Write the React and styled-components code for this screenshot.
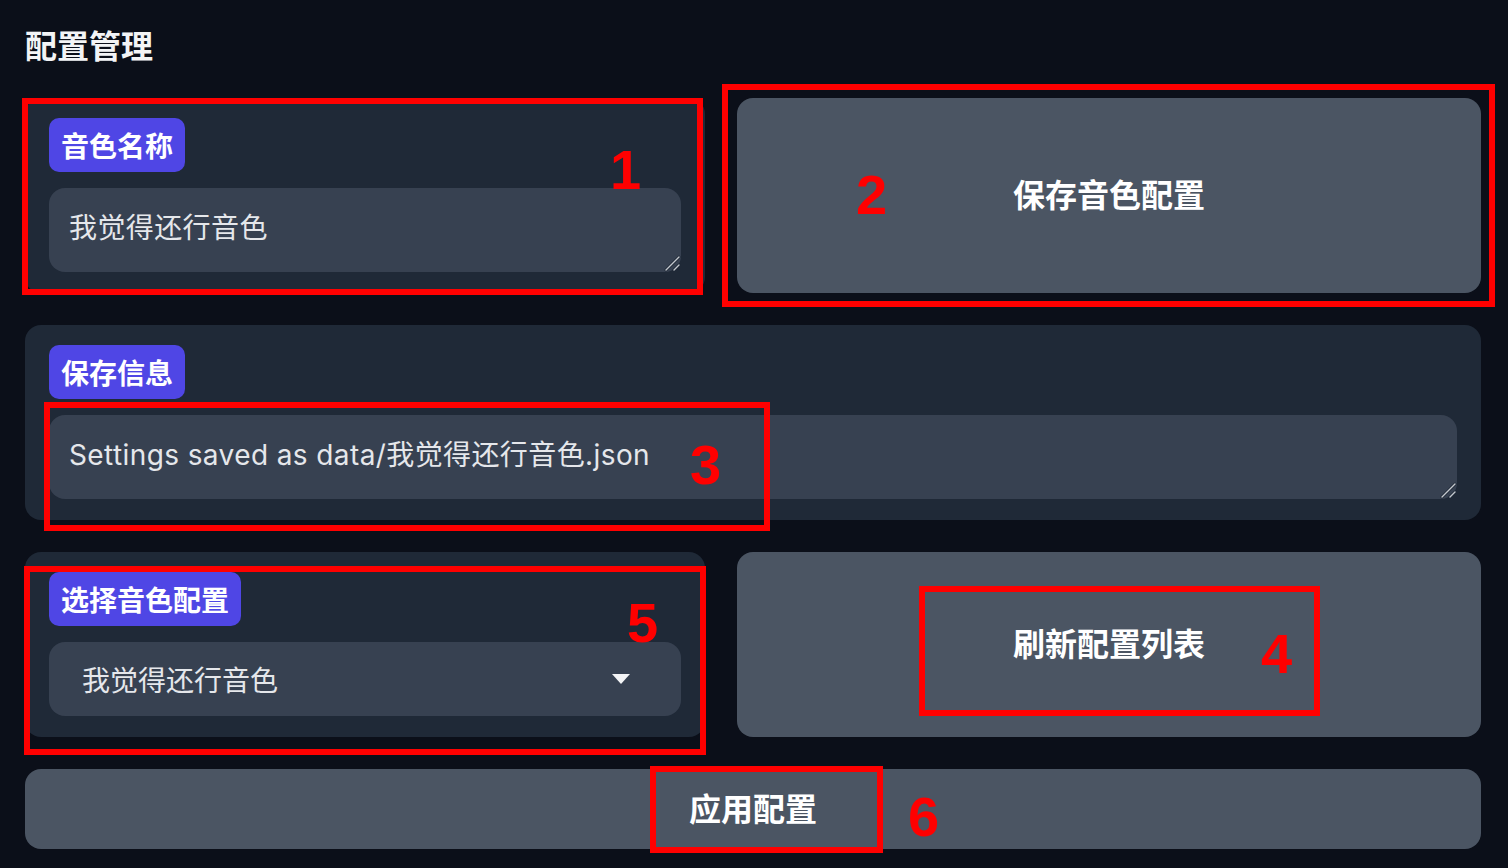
import React from 'react';
import styled, { createGlobalStyle } from 'styled-components';

const GlobalStyle = createGlobalStyle`
  html, body {
    margin: 0;
    padding: 0;
    background: #0b0f19;
  }
  body {
    font-family: Inter, "Noto Sans CJK SC", sans-serif;
    color: #f3f4f6;
  }
  * {
    box-sizing: border-box;
  }
`;

const Page = styled.div`
  position: relative;
  width: 1508px;
  height: 868px;
  padding: 22px 27px 0 25px;
  display: flex;
  flex-direction: column;
  gap: 32px;
  overflow: hidden;
`;

const Title = styled.div`
  font-family: "Noto Sans CJK SC", sans-serif;
  font-size: 32px;
  font-weight: 700;
  line-height: 44px;
  height: 44px;
  color: #f3f4f6;
`;

const Row = styled.div`
  display: grid;
  grid-template-columns: 680px 1fr;
  gap: 32px;
`;

const Panel = styled.div`
  background: #1f2937;
  border-radius: 16px;
  padding: 20px 24px 21px;
  display: flex;
  flex-direction: column;
  align-items: flex-start;
  gap: 16px;
`;

const Badge = styled.span`
  display: inline-block;
  background: #4f46e5;
  color: #ffffff;
  font-family: "Noto Sans CJK SC", sans-serif;
  font-weight: 700;
  font-size: 28px;
  line-height: 38px;
  padding: 8px 12px;
  border-radius: 10px;
`;

const FieldWrap = styled.div`
  position: relative;
  width: 100%;
`;

const TextArea = styled.textarea`
  display: block;
  width: 100%;
  height: 84px;
  background: #374151;
  color: #e5e7eb;
  border: none;
  outline: none;
  border-radius: 16px;
  padding: 20px 20px 18px;
  font-family: Inter, "Noto Sans CJK SC", sans-serif;
  font-size: 28px;
  line-height: 40px;
  letter-spacing: 0.4px;
  resize: none;
`;

const Grip = styled.svg`
  position: absolute;
  right: 0;
  bottom: 0;
  pointer-events: none;
`;

const SelectBox = styled.div`
  width: 100%;
  height: 74px;
  background: #374151;
  border-radius: 16px;
  padding: 0 51px 0 33px;
  display: flex;
  align-items: center;
  justify-content: space-between;
  font-family: "Noto Sans CJK SC", sans-serif;
  font-size: 28px;
  color: #e5e7eb;
`;

const Button = styled.button`
  border: none;
  border-radius: 16px;
  background: #4b5563;
  color: #ffffff;
  font-family: "Noto Sans CJK SC", sans-serif;
  font-weight: 700;
  font-size: 32px;
  height: ${(p) => (p.$h ? `${p.$h}px` : 'auto')};
  display: flex;
  align-items: center;
  justify-content: center;
  padding: 0 0 5px;
  cursor: pointer;
`;

const Mark = styled.div`
  position: absolute;
  left: ${(p) => p.$x}px;
  top: ${(p) => p.$y}px;
  width: ${(p) => p.$w}px;
  height: ${(p) => p.$h}px;
  border: 6px solid #ff0000;
  pointer-events: none;
`;

const Num = styled.span`
  position: absolute;
  left: ${(p) => p.$x}px;
  top: ${(p) => p.$y}px;
  font-family: "Liberation Sans", Arial, sans-serif;
  font-weight: 700;
  font-size: 56px;
  line-height: 1;
  color: #ff0000;
  pointer-events: none;
`;

const Arrow = () => (
  <svg width="18" height="10" viewBox="0 0 18 10">
    <path d="M0 0 H18 L9 10 Z" fill="#f3f4f6" />
  </svg>
);

const ResizeGrip = () => (
  <Grip width="18" height="18" viewBox="0 0 18 18">
    <g strokeLinecap="round">
      <path d="M3 16 L16 3 M11 16 L16 11" stroke="#1f2937" strokeWidth="3" />
      <path d="M3 16 L16 3 M11 16 L16 11" stroke="#c4c8ce" strokeWidth="1.4" />
    </g>
  </Grip>
);

const Field = ({ value }) => (
  <FieldWrap>
    <TextArea defaultValue={value} />
    <ResizeGrip />
  </FieldWrap>
);

const boxes = [
  { x: 22, y: 98, w: 681, h: 197 },
  { x: 722, y: 84, w: 773, h: 223 },
  { x: 44, y: 402, w: 726, h: 129 },
  { x: 919, y: 586, w: 401, h: 130 },
  { x: 24, y: 566, w: 682, h: 189 },
  { x: 650, y: 766, w: 233, h: 87 },
];

const nums = [
  { n: '1', x: 610, y: 142 },
  { n: '2', x: 856, y: 167 },
  { n: '3', x: 690, y: 437 },
  { n: '4', x: 1261, y: 626 },
  { n: '5', x: 627, y: 595 },
  { n: '6', x: 908, y: 789 },
];

export default function App() {
  return (
    <>
      <GlobalStyle />
      <Page>
        <Title>配置管理</Title>

        <Row>
          <Panel>
            <Badge>音色名称</Badge>
            <Field value="我觉得还行音色" />
          </Panel>
          <Button>保存音色配置</Button>
        </Row>

        <Panel>
          <Badge>保存信息</Badge>
          <Field value="Settings saved as data/我觉得还行音色.json" />
        </Panel>

        <Row>
          <Panel>
            <Badge>选择音色配置</Badge>
            <SelectBox>
              <span>我觉得还行音色</span>
              <Arrow />
            </SelectBox>
          </Panel>
          <Button>刷新配置列表</Button>
        </Row>

        <Button $h={80}>应用配置</Button>

        {boxes.map((b, i) => (
          <Mark key={i} $x={b.x} $y={b.y} $w={b.w} $h={b.h} />
        ))}
        {nums.map((m) => (
          <Num key={m.n} $x={m.x} $y={m.y}>
            {m.n}
          </Num>
        ))}
      </Page>
    </>
  );
}
